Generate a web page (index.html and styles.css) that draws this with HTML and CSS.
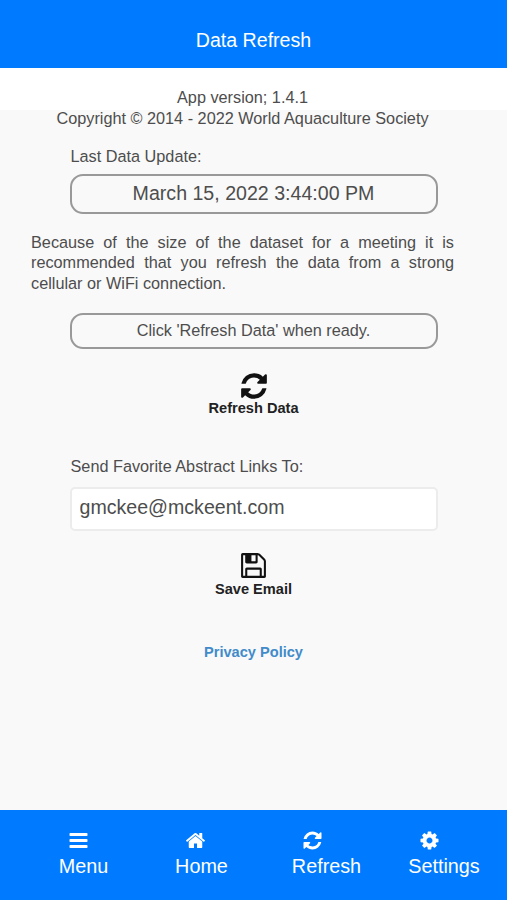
FILE: index.html
```html
<!DOCTYPE html>
<html lang="en">
<head>
<meta charset="utf-8">
<title>Data Refresh</title>
<link rel="stylesheet" href="styles.css">
</head>
<body>
<div class="app">
  <header class="top-bar"><h1 class="top-title">Data Refresh</h1></header>
  <main class="content">
    <div class="about">
      <div>App version; 1.4.1</div>
      <div>Copyright © 2014 - 2022 World Aquaculture Society</div>
    </div>
    <div class="field-label first-label">Last Data Update:</div>
    <div class="pill pill-date">March 15, 2022 3:44:00 PM</div>
    <p class="note">Because of the size of the dataset for a meeting it is recommended that you refresh the data from a strong cellular or WiFi connection.</p>
    <div class="pill pill-status">Click 'Refresh Data' when ready.</div>
    <button class="action action-refresh" type="button">
      <svg class="action-icon" viewBox="0 0 1792 1792"><path d="M1639 1056q0 5-1 7-64 268-268 434.5t-478 166.5q-146 0-282.5-55t-243.5-157l-129 129q-19 19-45 19t-45-19-19-45v-448q0-26 19-45t45-19h448q26 0 45 19t19 45-19 45l-137 137q71 66 161 102t187 36q134 0 250-65t186-179q11-17 53-117 8-23 30-23h192q13 0 22.5 9.5t9.5 22.5zm25-800v448q0 26-19 45t-45 19h-448q-26 0-45-19t-19-45 19-45l138-138q-148-137-349-137-134 0-250 65t-186 179q-11 17-53 117-8 23-30 23h-199q-13 0-22.5-9.5t-9.5-22.5v-7q65-268 270-434.5t480-166.5q146 0 284 55.5t245 156.5l130-129q19-19 45-19t45 19 19 45z"/></svg>
      <span>Refresh Data</span>
    </button>
    <div class="field-label send-label">Send Favorite Abstract Links To:</div>
    <input class="email" type="text" value="gmckee@mckeent.com">
    <button class="action action-save" type="button">
      <svg class="action-icon" viewBox="0 0 1792 1792"><path d="M512 1536h768v-384h-768v384zm896 0h128v-896q0-14-10-38.5t-20-34.5l-281-281q-10-10-34-20t-39-10v416q0 40-28 68t-68 28h-576q-40 0-68-28t-28-68v-416h-128v1280h128v-416q0-40 28-68t68-28h832q40 0 68 28t28 68v416zm-384-928v-320q0-13-9.5-22.5t-22.5-9.5h-192q-13 0-22.5 9.5t-9.5 22.5v320q0 13 9.5 22.5t22.5 9.5h192q13 0 22.5-9.5t9.5-22.5zm640 32v928q0 40-28 68t-68 28h-1344q-40 0-68-28t-28-68v-1344q0-40 28-68t68-28h928q40 0 88 20t76 48l280 280q28 28 48 76t20 88z"/></svg>
      <span>Save Email</span>
    </button>
    <a class="privacy" href="#">Privacy Policy</a>
  </main>
  <nav class="bottom-bar">
    <div class="nav-icons">
      <svg class="nav-icon" viewBox="0 0 1792 1792"><path d="M1664 1344v128q0 26-19 45t-45 19h-1408q-26 0-45-19t-19-45v-128q0-26 19-45t45-19h1408q26 0 45 19t19 45zm0-512v128q0 26-19 45t-45 19h-1408q-26 0-45-19t-19-45v-128q0-26 19-45t45-19h1408q26 0 45 19t19 45zm0-512v128q0 26-19 45t-45 19h-1408q-26 0-45-19t-19-45v-128q0-26 19-45t45-19h1408q26 0 45 19t19 45z"/></svg>
      <svg class="nav-icon" viewBox="0 0 1792 1792"><path d="M1472 992v480q0 26-19 45t-45 19h-384v-384h-256v384h-384q-26 0-45-19t-19-45v-480q0-1 .5-3t.5-3l575-474 575 474q1 2 1 6zm223-69l-62 74q-8 9-21 11h-3q-13 0-21-7l-692-577-692 577q-12 8-24 7-13-2-21-11l-62-74q-8-10-7-23.5t11-21.5l719-599q32-26 76-26t76 26l244 204v-195q0-14 9-23t23-9h192q14 0 23 9t9 23v408l219 182q10 8 11 21.5t-7 23.5z"/></svg>
      <svg class="nav-icon" viewBox="0 0 1792 1792"><path d="M1639 1056q0 5-1 7-64 268-268 434.5t-478 166.5q-146 0-282.5-55t-243.5-157l-129 129q-19 19-45 19t-45-19-19-45v-448q0-26 19-45t45-19h448q26 0 45 19t19 45-19 45l-137 137q71 66 161 102t187 36q134 0 250-65t186-179q11-17 53-117 8-23 30-23h192q13 0 22.5 9.5t9.5 22.5zm25-800v448q0 26-19 45t-45 19h-448q-26 0-45-19t-19-45 19-45l138-138q-148-137-349-137-134 0-250 65t-186 179q-11 17-53 117-8 23-30 23h-199q-13 0-22.5-9.5t-9.5-22.5v-7q65-268 270-434.5t480-166.5q146 0 284 55.5t245 156.5l130-129q19-19 45-19t45 19 19 45z"/></svg>
      <svg class="nav-icon" viewBox="0 0 1792 1792"><path d="M1152 896q0-106-75-181t-181-75-181 75-75 181 75 181 181 75 181-75 75-181zm512-109v222q0 12-8 23t-20 13l-185 28q-19 54-39 91 35 50 107 138 10 12 10 25t-9 23q-27 37-99 108t-94 71q-12 0-26-9l-138-108q-44 23-91 38-16 136-29 186-7 28-36 28h-222q-14 0-24.5-8.5t-11.5-21.5l-28-184q-49-16-90-37l-141 107q-10 9-25 9-14 0-25-11-126-114-165-168-7-10-7-23 0-12 8-23 15-21 51-66.5t54-70.5q-27-50-41-99l-183-27q-13-2-21-12.5t-8-23.5v-222q0-12 8-23t19-13l186-28q14-46 39-92-40-57-107-138-10-12-10-24 0-10 9-23 26-36 98.5-107.5t94.5-71.5q13 0 26 10l138 107q44-23 91-38 16-136 29-186 7-28 36-28h222q14 0 24.5 8.5t11.5 21.5l28 184q49 16 90 37l142-107q9-9 24-9 13 0 25 10 129 119 165 170 7 8 7 22 0 12-8 23-15 21-51 66.5t-54 70.5q26 50 41 98l183 28q13 2 21 12.5t8 23.5z"/></svg>
    </div>
    <div class="nav-labels">
      <span>Menu</span>
      <span>Home</span>
      <span>Refresh</span>
      <span>Settings</span>
    </div>
  </nav>
</div>
</body>
</html>
```
FILE: styles.css
```css
* { box-sizing: border-box; }
html, body { margin: 0; padding: 0; }
body {
  font-family: "Liberation Sans", Arial, sans-serif;
  color: #4d4d4d;
  font-size: 16.25px;
}
.app {
  width: 507px;
  height: 900px;
  display: flex;
  flex-direction: column;
  overflow: hidden;
}
.top-bar {
  height: 68px;
  flex: none;
  padding-top: 12px;
  background: #007bff;
  display: flex;
  align-items: center;
  justify-content: center;
}
.top-title {
  margin: 0;
  color: #fff;
  font-size: 19.6px;
  font-weight: 400;
}
.content {
  flex: 1;
  background: linear-gradient(#fff 42px, #f9f9f9 42px);
  display: flex;
  flex-direction: column;
  align-items: center;
  padding-top: 19px;
}
.about {
  width: 486px;
  margin-right: 22px;
  text-align: center;
  line-height: 20.5px;
}
.field-label {
  width: 368px;
  padding-left: 1px;
  line-height: 20px;
}
.first-label { margin-top: 18px; }
.pill {
  width: 368px;
  border: 2px solid #999;
  border-radius: 13px;
  display: flex;
  align-items: center;
  justify-content: center;
}
.pill-date {
  height: 39.5px;
  margin-top: 8px;
  font-size: 19.6px;
}
.pill-status { height: 36.5px; margin-top: 19px; }
.note {
  width: 423px;
  margin: 18px 22px 0 0;
  line-height: 20.7px;
  text-align: justify;
}
.action {
  display: flex;
  flex-direction: column;
  align-items: center;
  padding: 0;
  border: 0;
  background: none;
  font-family: inherit;
  font-size: 14.6px;
  font-weight: 700;
  color: #222;
}
.action span { line-height: 16px; }
.action-icon { width: 30px; height: 30px; display: block; fill: #111; }
.action-refresh { margin-top: 22px; }
.action-refresh span { margin-top: -1px; }
.send-label { margin-top: 40px; }
.email {
  width: 368px;
  height: 44px;
  margin-top: 11px;
  padding: 0 8px 4px;
  background: #fff;
  border: 2px solid #ececec;
  border-radius: 5px;
  font-family: inherit;
  font-size: 19.6px;
  color: #4d4d4d;
}
.action-save { margin-top: 19.5px; }
.action-save .action-icon { width: 29px; height: 29px; }
.action-save span { margin-top: 1px; }
.privacy {
  margin-top: 47px;
  font-size: 14.6px;
  font-weight: 700;
  color: #428bca;
  text-decoration: none;
}
.bottom-bar {
  height: 90px;
  flex: none;
  background: #007bff;
  color: #fff;
  padding-top: 20px;
}
.nav-icons {
  display: grid;
  grid-template-columns: repeat(4, 117px);
  justify-items: center;
  padding-left: 20px;
}
.nav-icon { width: 21px; height: 21px; display: block; fill: #fff; }
.nav-labels {
  display: grid;
  grid-template-columns: 117px 119px 131px 104px;
  justify-items: center;
  padding-left: 25px;
  margin-top: 3px;
  font-size: 19.8px;
  line-height: 24px;
}
```
